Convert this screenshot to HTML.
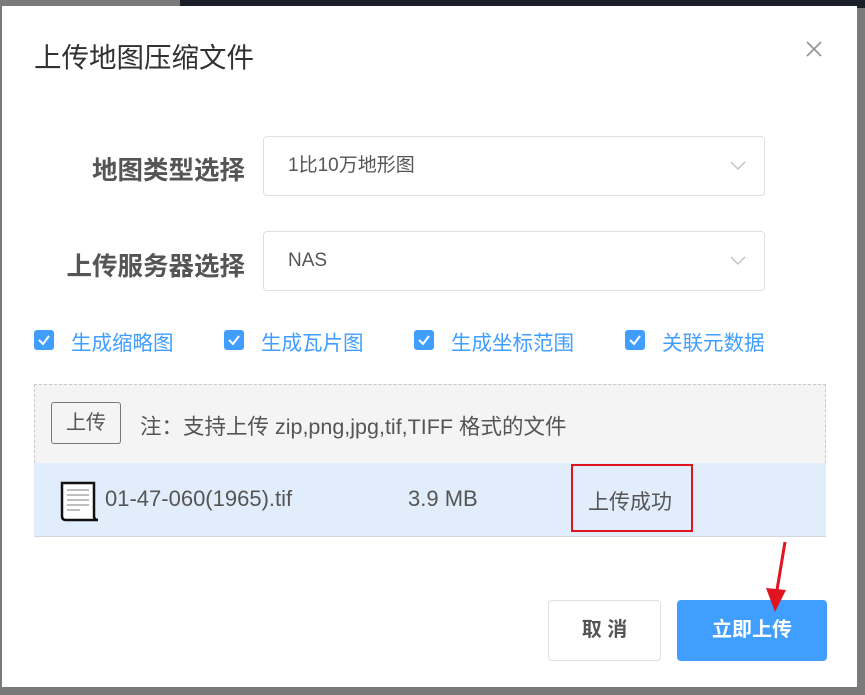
<!DOCTYPE html>
<html><head><meta charset="utf-8"><style>
*{box-sizing:border-box;margin:0;padding:0}
body{width:865px;height:695px;background:#7a7a7a;position:relative;overflow:hidden;font-family:"Liberation Sans","Noto Sans CJK SC",sans-serif;color:#606266}
.top{position:absolute;left:180px;top:0;width:685px;height:8px;background:#1b1f2a}
.dlg{position:absolute;left:2px;top:6px;width:855px;height:681px;background:#fff}
.a{position:absolute;white-space:nowrap}
.title{left:34px;top:35px;font-size:27.5px;color:#303133}
.lbl{font-size:25.5px;font-weight:bold;color:#555;text-align:right;width:245px;left:0}
.sel{left:263px;width:502px;height:60px;border:1px solid #dcdfe6;border-radius:4px;font-size:19px;color:#555;padding-left:24px;line-height:58px}
.sel svg{position:absolute;right:18px;top:24px}
.cb{width:20px;height:20px;background:#409eff;border-radius:3px}
.cbt{font-size:20.5px;color:#409eff}
</style></head><body>
<div class="top"></div>
<div class="dlg"></div>
<div class="a title">上传地图压缩文件</div>
<svg class="a" style="left:805px;top:40px" width="18" height="18"><path d="M2 2L16 16M16 2L2 16" stroke="#909399" stroke-width="1.6"/></svg>
<div class="a lbl" style="top:150px">地图类型选择</div>
<div class="a sel" style="top:136px">1比10万地形图<svg width="16" height="10"><path d="M1 1L8 8L15 1" fill="none" stroke="#c0c4cc" stroke-width="1.5"/></svg></div>
<div class="a lbl" style="top:246px">上传服务器选择</div>
<div class="a sel" style="top:231px">NAS<svg width="16" height="10"><path d="M1 1L8 8L15 1" fill="none" stroke="#c0c4cc" stroke-width="1.5"/></svg></div>
<div class="a cb" style="left:34px;top:330px"><svg width="20" height="20"><path d="M5 10L9 14L15 6" fill="none" stroke="#fff" stroke-width="2"/></svg></div>
<div class="a cbt" style="left:71px;top:326px">生成缩略图</div>
<div class="a cb" style="left:224px;top:330px"><svg width="20" height="20"><path d="M5 10L9 14L15 6" fill="none" stroke="#fff" stroke-width="2"/></svg></div>
<div class="a cbt" style="left:261px;top:326px">生成瓦片图</div>
<div class="a cb" style="left:414px;top:330px"><svg width="20" height="20"><path d="M5 10L9 14L15 6" fill="none" stroke="#fff" stroke-width="2"/></svg></div>
<div class="a cbt" style="left:451px;top:326px">生成坐标范围</div>
<div class="a cb" style="left:625px;top:330px"><svg width="20" height="20"><path d="M5 10L9 14L15 6" fill="none" stroke="#fff" stroke-width="2"/></svg></div>
<div class="a cbt" style="left:662px;top:326px">关联元数据</div>
<div class="a" style="left:34px;top:384px;width:792px;height:79px;background:#f4f4f4;border:1px dashed #c8c8c8;border-bottom:none"></div>
<div class="a" style="left:51px;top:402px;width:70px;height:42px;border:1px solid #777;border-radius:3px;font-size:20px;color:#555;text-align:center;line-height:40px">上传</div>
<div class="a" style="left:140px;top:410px;font-size:21.5px;color:#555">注：支持上传 zip,png,jpg,tif,TIFF 格式的文件</div>
<div class="a" style="left:34px;top:463px;width:792px;height:74px;background:#e2edfc;border-bottom:1px solid #d0d6e0"></div>
<svg class="a" style="left:58px;top:480px" width="42" height="42"><path d="M4 3H36V36Q36 40 40 40H8Q4 40 4 36Z" fill="#fff" stroke="#111" stroke-width="2.5"/><path d="M9 10H31M9 15H31M9 20H31M9 25H31M9 30H22" stroke="#999" stroke-width="1.2"/></svg>
<div class="a" style="left:105px;top:486px;font-size:22px;color:#555">01-47-060(1965).tif</div>
<div class="a" style="left:408px;top:486px;font-size:22px;color:#555">3.9 MB</div>
<div class="a" style="left:571px;top:464px;width:122px;height:68px;border:2px solid #e0141e"></div>
<div class="a" style="left:588px;top:486px;font-size:21px;color:#555">上传成功</div>
<div class="a" style="left:548px;top:600px;width:113px;height:61px;border:1px solid #dcdfe6;border-radius:4px;font-size:20px;color:#555;text-align:center;line-height:59px;font-weight:bold">取 消</div>
<div class="a" style="left:677px;top:600px;width:150px;height:61px;background:#409eff;border-radius:4px;font-size:20px;color:#fff;text-align:center;line-height:61px;font-weight:bold">立即上传</div>
<svg class="a" style="left:760px;top:538px" width="40" height="80"><path d="M25 4L16 58" stroke="#e0141e" stroke-width="3"/><path d="M6 50L15 74L26 52Z" fill="#e0141e"/></svg>
</body></html>
